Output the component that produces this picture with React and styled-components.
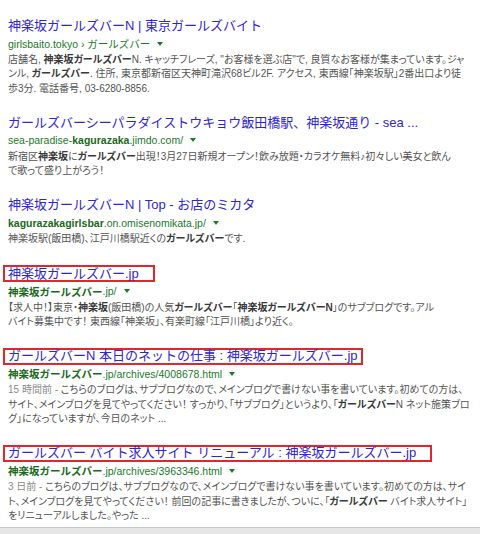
import React from 'react'
import styled, { createGlobalStyle } from 'styled-components'

const GlobalStyle = createGlobalStyle`
    html, body {
        margin: 0;
        padding: 0;
        background: #ffffff;
    }
    body {
        font-family: "Liberation Sans", "Noto Sans CJK JP", sans-serif;
    }
`

const results = [
    {
        title: '神楽坂ガールズバーN | 東京ガールズバイト',
        url: [['girlsbaito.tokyo\u00a0›\u00a0ガールズバー', false]],
        lines: [
            [['店舗名, ', 0], ['神楽坂ガールズバー', 1], ['N. キャッチフレーズ, "お客様を選ぶ店"で, 良質なお客様が集まっています。ジャ', 0]],
            [['ンル, ', 0], ['ガールズバー', 1], ['. 住所, 東京都新宿区天神町滝沢68ビル2F. アクセス, 東西線「神楽坂駅」2番出口より徒', 0]],
            [['歩3分. 電話番号, 03-6280-8856.', 0]],
        ],
    },
    {
        title: 'ガールズバーシーパラダイストウキョウ飯田橋駅、神楽坂通り - sea ...',
        url: [['sea-paradise-', false], ['kagurazaka', true], ['.jimdo.com/', false]],
        lines: [
            [['新宿区', 0], ['神楽坂', 1], ['に', 0], ['ガールズバー', 1], ['出現！3月27日新規オープン！飲み放題・カラオケ無料♪初々しい美女と飲ん', 0]],
            [['で歌って盛り上がろう！', 0]],
        ],
    },
    {
        title: '神楽坂ガールズバーN | Top - お店のミカタ',
        url: [['kagurazakagirlsbar', true], ['.on.omisenomikata.jp/', false]],
        lines: [
            [['神楽坂駅(飯田橋)、江戸川橋駅近くの', 0], ['ガールズバー', 1], ['です.', 0]],
        ],
    },
    {
        title: '神楽坂ガールズバー.jp',
        boxed: 14,
        url: [['神楽坂ガールズバー', true], ['.jp/', false]],
        lines: [
            [['【求人中！】東京・', 0], ['神楽坂', 1], ['(飯田橋)の人気', 0], ['ガールズバー', 1], ['「', 0], ['神楽坂ガールズバーN', 1], ['」のサブブログです。アル', 0]],
            [['バイト募集中です！ 東西線「神楽坂」、有楽町線「江戸川橋」より近く。', 0]],
        ],
    },
    {
        title: 'ガールズバーN 本日のネットの仕事 : 神楽坂ガールズバー.jp',
        boxed: 3,
        url: [['神楽坂ガールズバー', true], ['.jp/archives/4008678.html', false]],
        lines: [
            [['15 時間前 - ', 2], ['こちらのブログは、サブブログなので、メインブログで書けない事を書いています。初めての方は、', 0]],
            [['サイト、メインブログを見てやってください！ すっかり、「サブブログ」というより、「', 0], ['ガールズバー', 1], ['N ネット施策ブロ', 0]],
            [['グ」になっていますが、今日のネット ...', 0]],
        ],
    },
    {
        title: 'ガールズバー バイト求人サイト リニューアル : 神楽坂ガールズバー.jp',
        boxed: 14,
        url: [['神楽坂ガールズバー', true], ['.jp/archives/3963346.html', false]],
        lines: [
            [['3 日前 - ', 2], ['こちらのブログは、サブブログなので、メインブログで書けない事を書いています。初めての方は、サイ', 0]],
            [['ト、メインブログを見てやってください！ 前回の記事に書きましたが、ついに、「', 0], ['ガールズバー', 1], [' バイト求人サイト」', 0]],
            [['をリニューアルしました。やった ...', 0]],
        ],
    },
]

function App() {
    return (
        <Page>
            <GlobalStyle />
            <List>
                {results.map((r, i) => (
                    <Result key={i}>
                        <TitleRow>
                            {r.boxed !== undefined ? (
                                <Boxed $pad={r.boxed}>
                                    <Title>{r.title}</Title>
                                </Boxed>
                            ) : (
                                <Title>{r.title}</Title>
                            )}
                        </TitleRow>
                        <UrlRow>
                            {r.url.map(([t, b], j) => (b ? <UrlBold key={j}>{t}</UrlBold> : <span key={j}>{t}</span>))}
                            <Caret />
                        </UrlRow>
                        <Snippet>
                            {r.lines.map((line, j) => (
                                <Line key={j}>
                                    {line.map(([t, k], n) =>
                                        k === 1 ? <Em key={n}>{t}</Em> : k === 2 ? <Date key={n}>{t}</Date> : <span key={n}>{t}</span>
                                    )}
                                </Line>
                            ))}
                        </Snippet>
                    </Result>
                ))}
            </List>
            <Footer />
        </Page>
    )
}

export default App

const Page = styled.div`
    width: 480px;
    height: 534px;
    display: flex;
    flex-direction: column;
    overflow: hidden;
    background: #ffffff;
`
const List = styled.div`
    flex: 1;
    padding: 17px 0 0 8px;
    display: flex;
    flex-direction: column;
    gap: 18px;
`
const Result = styled.div`
    display: flex;
    flex-direction: column;
`
const TitleRow = styled.div`
    height: 18px;
    display: flex;
    align-items: center;
    white-space: nowrap;
`
const Title = styled.span`
    font-size: 13px;
    line-height: 14px;
    color: #2f25d2;
`
const Boxed = styled.span`
    display: inline-flex;
    align-items: center;
    height: 13px;
    margin-left: -5px;
    padding: 0 ${p => p.$pad}px 0 3px;
    border: 2px solid #e4262c;
`
const UrlRow = styled.div`
    height: 17px;
    display: flex;
    align-items: center;
    font-size: 10.5px;
    color: #1b7a2b;
    white-space: nowrap;
`
const UrlBold = styled.b`
    font-weight: bold;
    color: #1a6a1a;
`
const Caret = styled.span`
    width: 0;
    height: 0;
    margin-left: 7px;
    border-left: 3px solid transparent;
    border-right: 3px solid transparent;
    border-top: 4px solid #1b7a2b;
`
const Snippet = styled.div`
    margin-top: 1px;
    font-size: 10px;
    line-height: 14.3px;
    color: #545454;
    font-feature-settings: "palt";
`
const Line = styled.div`
    white-space: nowrap;
`
const Em = styled.b`
    font-weight: bold;
    color: #3a3a3a;
`
const Date = styled.span`
    color: #8a8a8a;
`
const Footer = styled.div`
    height: 6px;
    border-top: 1px solid #c9c9c9;
    background: #e6e6e6;
`
